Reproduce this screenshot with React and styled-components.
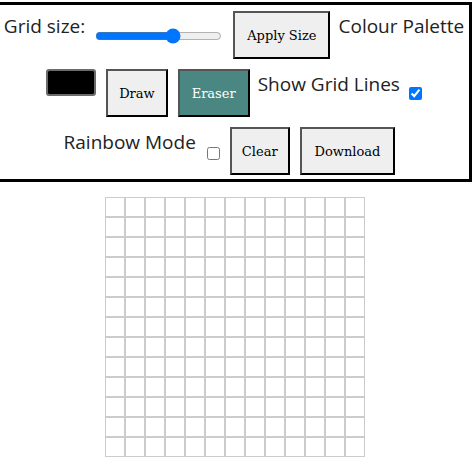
import React from 'react';
import styled, { createGlobalStyle } from 'styled-components';

const GlobalStyle = createGlobalStyle`
  body {
    margin: 0;
    background: #fff;
    font-family: "Open Sans", "Noto Sans", sans-serif;
    color: #222;
  }
`

const Page = styled.div`
  padding-top: 2px;
`

const Controls = styled.section`
  margin-left: -3px;
  border: 3px solid #000;
  padding: 6px 0 4px;
  display: flex;
  flex-direction: column;
  gap: 10px;
`

const Row = styled.div`
  display: flex;
  justify-content: center;
  align-items: flex-start;
  gap: 10px;
  padding-right: ${p => p.$shift || 0}px;
`

const Label = styled.span`
  font-size: 19px;
  line-height: 24px;
  margin: 3px ${p => p.$mr || 0}px 0 ${p => p.$ml || 0}px;
  white-space: nowrap;
`

const Slider = styled.input`
  width: 127px;
  height: 16px;
  margin: 17px 1px 0 0;
`

const Button = styled.button`
  height: 48px;
  padding: 0 ${p => p.$pad || 12}px;
  border-width: 2px;
  border-style: solid;
  border-color: #555 #000 #000 #555;
  border-radius: 0;
  background: ${p => p.$active ? '#4a8682' : '#efefef'};
  color: ${p => p.$active ? '#fff' : '#000'};
  font-family: "DejaVu Serif", "Liberation Serif", serif;
  font-size: 13px;
  line-height: 15px;
  cursor: pointer;
`

const Swatch = styled.input`
  -webkit-appearance: none;
  appearance: none;
  width: 50px;
  height: 27px;
  padding: 0;
  margin: 0;
  border: 2px solid #6b6b6b;
  border-radius: 3px;
  background: #000;
  &::-webkit-color-swatch-wrapper { padding: 0; }
  &::-webkit-color-swatch { border: none; }
`

const Check = styled.input`
  width: 13px;
  height: 13px;
  margin: ${p => p.$top}px 0 0;
`

const Board = styled.div`
  width: 260px;
  margin: 15px auto 0;
  display: grid;
  grid-template-columns: repeat(13, 20px);
  transform: translateX(-1px);
`

const Cell = styled.div`
  width: 20px;
  height: 20px;
  box-sizing: border-box;
  border: 1px solid #ccc;
  background: #fff;
`

const size = 13
const cells = Array.from({ length: size * size }, (_, i) => i)

function App() {
  return (
    <Page>
      <GlobalStyle />
      <Controls>
        <Row $shift={4}>
          <Label>Grid size:</Label>
          <Slider type="range" min="1" max="20" defaultValue="13" />
          <Button>Apply Size</Button>
          <Label $ml={-2} $mr={-3}>Colour Palette</Label>
        </Row>
        <Row $shift={1}>
          <Swatch type="color" defaultValue="#000000" />
          <Button $pad={11}>Draw</Button>
          <Button $active>Eraser</Button>
          <Label $ml={-2} $mr={-1}>Show Grid Lines</Label>
          <Check type="checkbox" defaultChecked $top={18} />
        </Row>
        <Row $shift={10}>
          <Label $mr={1}>Rainbow Mode</Label>
          <Check type="checkbox" $top={20} />
          <Button $pad={10}>Clear</Button>
          <Button $pad={13}>Download</Button>
        </Row>
      </Controls>
      <Board>
        {cells.map(i => <Cell key={i} />)}
      </Board>
    </Page>
  )
}

export default App;
